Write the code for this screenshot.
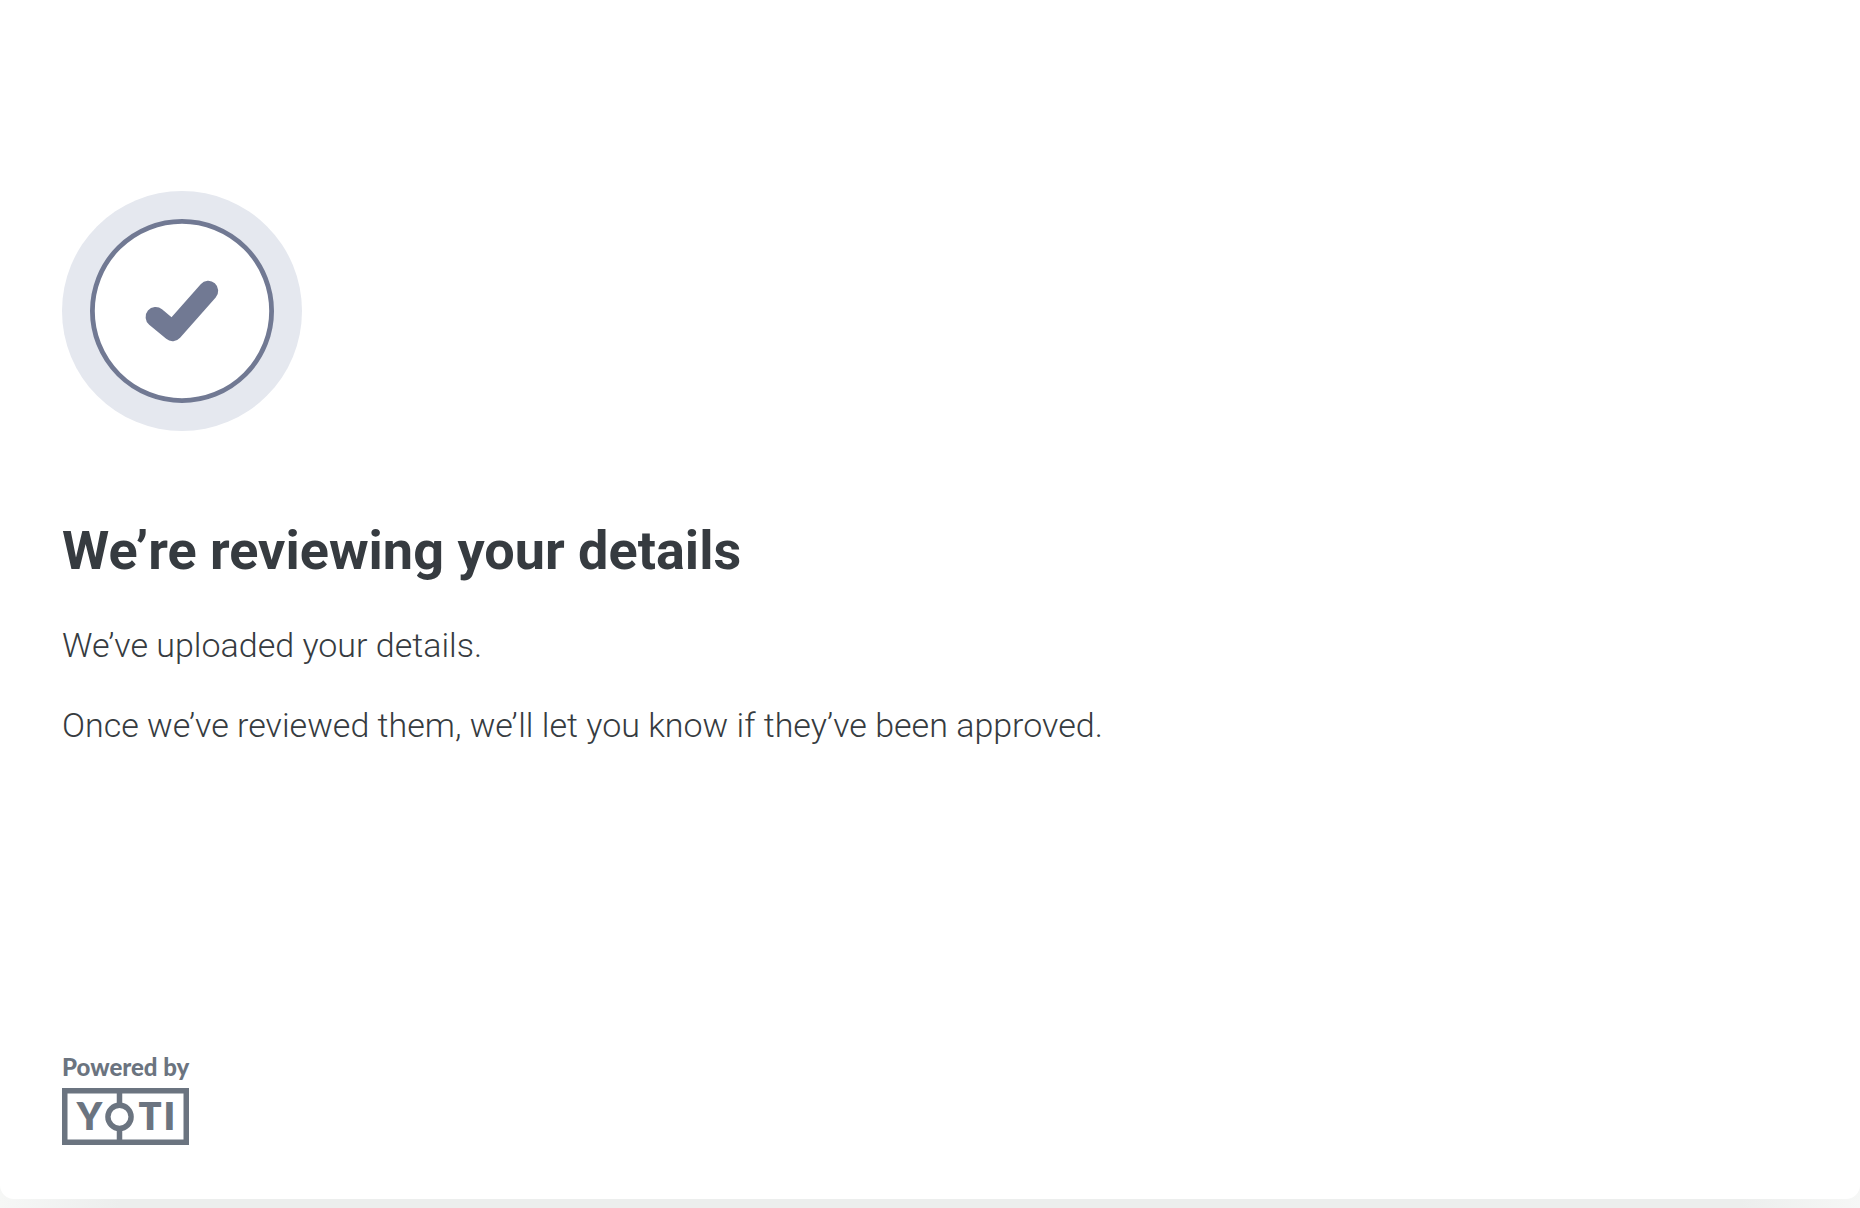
<main class="page">
  <section class="card">
    <svg class="status" viewBox="0 0 240 240" aria-hidden="true">
      <circle cx="120" cy="120" r="120" fill="#e5e8ef" />
      <circle cx="120" cy="120" r="89.6" fill="#fff" stroke="#717993" stroke-width="4.8" />
      <path
        d="M93.6 126 110.6 140.2 146.2 99.8"
        fill="none"
        stroke="#717993"
        stroke-width="20"
        stroke-linecap="round"
        stroke-linejoin="round"
      />
    </svg>

    <h1>We’re reviewing your details</h1>
    <p>We’ve uploaded your details.</p>
    <p>Once we’ve reviewed them, we’ll let you know if they’ve been approved.</p>

    <footer>
      <span class="powered">Powered by</span>
      <svg class="logo" viewBox="0 0 127 57" role="img" aria-label="Yoti">
        <rect x="2.75" y="2.75" width="121.5" height="51.5" fill="none" stroke="#6b7480" stroke-width="5.5" />
        <path d="M57.5 3v14M57.5 41v14" stroke="#6b7480" stroke-width="5.5" />
        <circle cx="57.5" cy="28.8" r="11.6" fill="none" stroke="#6b7480" stroke-width="5.4" />
        <text x="27.5" y="42.4">Y</text>
        <text x="88" y="42.4">T</text>
        <text x="107.5" y="42.4">I</text>
      </svg>
    </footer>
  </section>
</main>

<style>
  :global(body) {
    margin: 0;
  }

  .page {
    box-sizing: border-box;
    min-height: 100vh;
    padding-bottom: 9px;
    display: flex;
    background: linear-gradient(90deg, #f6f7f6, #eceeed 120px, #eceeed calc(100% - 120px), #f6f7f6);
  }

  .card {
    flex: 1;
    box-sizing: border-box;
    display: flex;
    flex-direction: column;
    padding: 191px 62px 54px;
    border-radius: 0 0 14px 14px;
    background: #fff;
    color: #363b40;
    font-family: Roboto, "Liberation Sans", sans-serif;
  }

  .status {
    width: 240px;
    height: 240px;
  }

  h1 {
    margin: 88px 0 38px;
    font-size: 54px;
    line-height: 64px;
    font-weight: 700;
  }

  p {
    margin: 0 0 32px;
    font-size: 34px;
    line-height: 48px;
    font-weight: 350;
  }

  footer {
    display: flex;
    flex-direction: column;
    align-items: flex-start;
    gap: 7px;
    margin-top: auto;
  }

  .powered {
    color: #6b7480;
    font-family: Lato, sans-serif;
    font-size: 24px;
    line-height: 28px;
    font-weight: 900;
  }

  .logo {
    width: 127px;
    height: 57px;
  }

  .logo text {
    fill: #6b7480;
    font-family: Lato, sans-serif;
    font-size: 38px;
    font-weight: 800;
    text-anchor: middle;
  }
</style>
